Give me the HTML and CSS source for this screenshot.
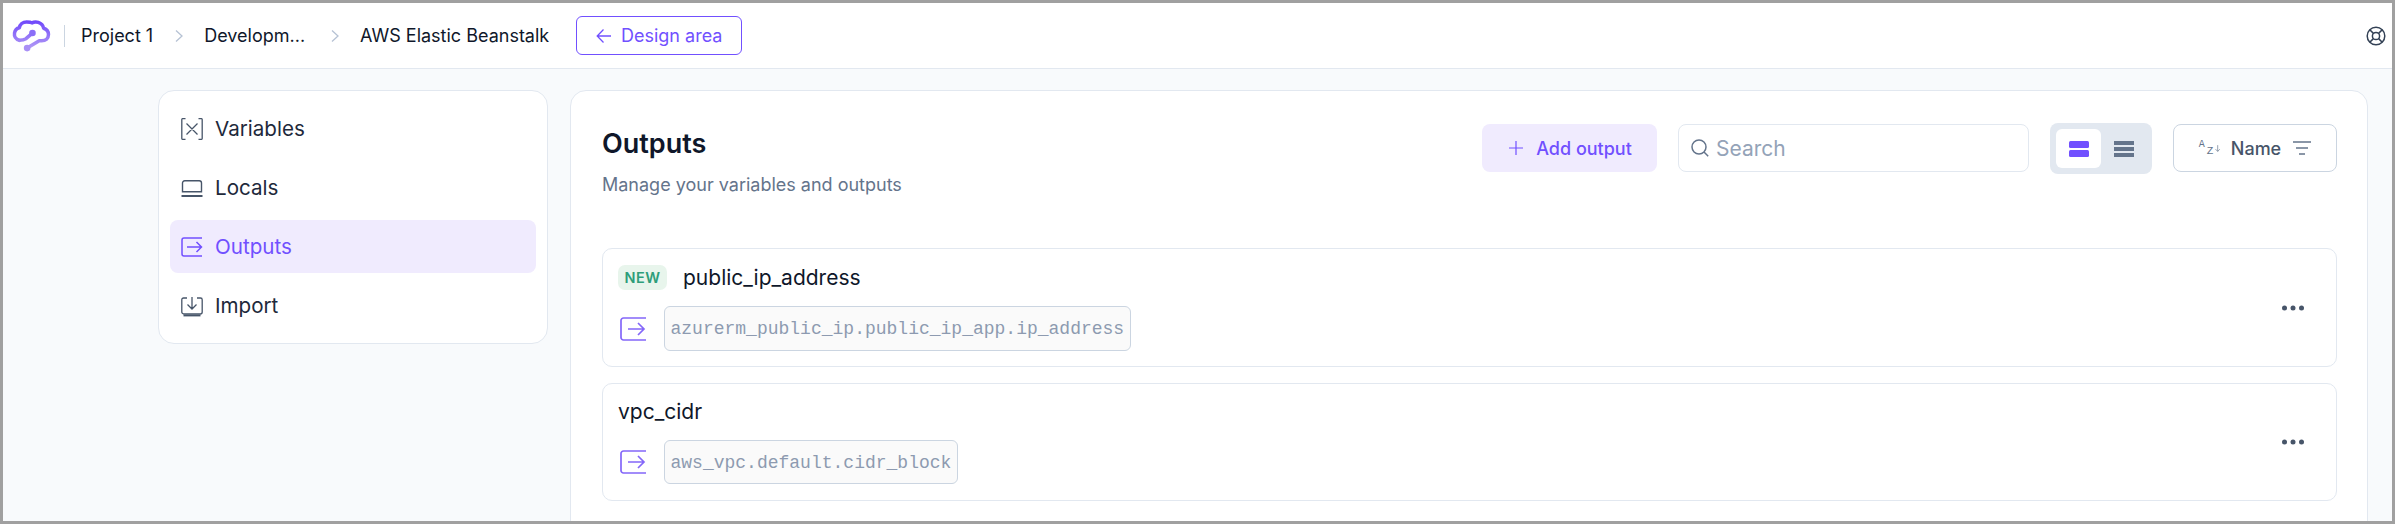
FILE: index.html
```html
<!DOCTYPE html>
<html lang="en">
<head>
<meta charset="utf-8">
<title>Outputs</title>
<link rel="stylesheet" href="styles.css">
</head>
<body>
<div class="frame">
  <header class="topbar">
    <svg class="logo" viewBox="0 0 40 34" fill="none" stroke-width="3.600" stroke-linecap="round" stroke-linejoin="round">
      <defs><linearGradient id="lg" gradientUnits="userSpaceOnUse" x1="0" y1="2" x2="0" y2="32"><stop offset="0" stop-color="#7048fb"/><stop offset="1" stop-color="#b6a0f5"/></linearGradient></defs>
      <path stroke="url(#lg)" d="M7.500 22C3.500 21 2 17.500 2.500 14.500C3 11.500 5 9.500 7.500 9C8 5.500 11 3 15 3C17 3 19 3 20.500 4C22.500 3 25 3 27 3.500C30 4.500 32 6.500 32.500 9.500C35.500 10.500 37.500 13 37.500 16C37.500 20 34.500 22.500 30.500 22.500H28L15.500 30"/>
      <path stroke="url(#lg)" d="M21 14.500L14 20.500Q12 22 7.500 22"/>
      <circle cx="21" cy="14.500" r="3.400" fill="#8a6ef8" stroke="none"/>
      <circle cx="15.500" cy="30" r="3.400" fill="#a98ff6" stroke="none"/>
    </svg>
    <span class="vsep"></span>
    <nav class="crumbs">
      <span class="crumb">Project 1</span>
      <svg class="chev" viewBox="0 0 10 14" fill="none" stroke="#b6c2d4" stroke-width="1.300"><path d="M2 1.500L8 7L2 12.500"/></svg>
      <span class="crumb trunc">Developm...</span>
      <svg class="chev" viewBox="0 0 10 14" fill="none" stroke="#b6c2d4" stroke-width="1.300"><path d="M2 1.500L8 7L2 12.500"/></svg>
      <span class="crumb">AWS Elastic Beanstalk</span>
    </nav>
    <button class="design-btn">
      <svg class="ico16" viewBox="0 0 16 16" fill="none" stroke="currentColor" stroke-width="1.300"><path d="M15 8H1.500M7.500 1.500L1.200 8L7.500 14.500"/></svg>
      Design area
    </button>
    <svg class="help" viewBox="0 0 20 20" fill="none" stroke="#334155" stroke-width="1.500"><circle cx="10" cy="10" r="8.800"/><circle cx="10" cy="10" r="3.600"/><path d="M3.800 3.800L7.400 7.400M16.200 3.800L12.600 7.400M3.800 16.200L7.400 12.600M16.200 16.200L12.600 12.600"/></svg>
  </header>

  <div class="content">
    <aside class="side">
      <a class="item">
        <svg class="nav-ico" viewBox="0 0 22 22" fill="none" stroke="#475569" stroke-width="1.300"><path d="M4.500 .7H1.500A.8.8 0 0 0 .8 1.500V20.500A.8.8 0 0 0 1.500 21.300H4.500M17.500 .7H20.500A.8.8 0 0 1 21.200 1.500V20.500A.8.8 0 0 1 20.500 21.300H17.500M5.500 5.500L16.500 16.500M16.500 5.500L5.500 16.500"/></svg>
        <span>Variables</span>
      </a>
      <a class="item">
        <svg class="nav-ico" viewBox="0 0 22 22" fill="none" stroke="#475569" stroke-width="1.400"><path d="M1.500 14.700V6A2.200 2.200 0 0 1 3.700 3.800H18.300A2.200 2.200 0 0 1 20.500 6V14.700Z"/><path d="M.5 19H21.500" stroke-width="2"/></svg>
        <span>Locals</span>
      </a>
      <a class="item active">
        <svg class="nav-ico" viewBox="0 0 22 22" fill="none" stroke="#7150ff" stroke-width="1.500"><path d="M21 2H3A2 2 0 0 0 1 4V18A2 2 0 0 0 3 20H21M6 11H20.500M15.500 6L20.500 11L15.500 16"/></svg>
        <span>Outputs</span>
      </a>
      <a class="item">
        <svg class="nav-ico" viewBox="0 0 22 22" fill="none" stroke="#475569" stroke-width="1.300"><path d="M6 3H2.500A1.700 1.700 0 0 0 .8 4.700V17A2 2 0 0 0 2.800 19H19.200A2 2 0 0 0 21.200 17V4.700A1.700 1.700 0 0 0 19.500 3H16M11 2V13.500M6.500 9.500L11 14L15.500 9.500"/><path d="M2.500 20.500H19.500" stroke-width="1.800"/></svg>
        <span>Import</span>
      </a>
    </aside>

    <main class="main">
      <div class="head">
        <div class="titles">
          <h1>Outputs</h1>
          <p>Manage your variables and outputs</p>
        </div>
        <div class="tools">
          <button class="add">
            <svg class="plus" viewBox="0 0 14 14" fill="none" stroke="currentColor" stroke-width="1.200"><path d="M7 0V14M0 7H14"/></svg>
            Add output
          </button>
          <label class="search">
            <svg class="search-ico" viewBox="0 0 18 18" fill="none" stroke="#64748b" stroke-width="1.500"><circle cx="8" cy="8" r="7"/><path d="M13 13L17.200 17.200"/></svg>
            <span>Search</span>
          </label>
          <div class="toggle">
            <span class="seg on"><svg class="seg-ico" viewBox="0 0 20 16" fill="#7150ff"><rect width="20" height="7" rx="1.500"/><rect y="9" width="20" height="7" rx="1.500"/></svg></span>
            <span class="seg"><svg class="seg-ico" viewBox="0 0 20 16" fill="#64748b"><rect width="20" height="4"/><rect y="6" width="20" height="4"/><rect y="12" width="20" height="4"/></svg></span>
          </div>
          <button class="sort">
            <span class="az"><span class="a">A</span><span class="z">Z</span><svg class="az-arrow" viewBox="0 0 8 10" fill="none" stroke="#64748b" stroke-width="1"><path d="M4 0V9.300M.8 6L4 9.300L7.200 6"/></svg></span>
            <span>Name</span>
            <svg class="filter" viewBox="0 0 18 14" fill="none" stroke="#64748b" stroke-width="1.300"><path d="M0 1H18M3 7H15M6 13H12"/></svg>
          </button>
        </div>
      </div>

      <section class="card">
        <div class="info">
          <div class="name-row"><span class="badge">NEW</span><span class="name">public_ip_address</span></div>
          <div class="value-row">
            <svg class="val-ico" viewBox="0 0 26 24" fill="none" stroke="#8467f9" stroke-width="1.700"><path d="M26 1H3.500A2.500 2.500 0 0 0 1 3.500V20.500A2.500 2.500 0 0 0 3.500 23H26M8 12H24M18 6L24 12L18 18"/></svg>
            <code>azurerm_public_ip.public_ip_app.ip_address</code>
          </div>
        </div>
        <svg class="more" viewBox="0 0 22 6" fill="#475569"><circle cx="2.500" cy="3" r="2.500"/><circle cx="11" cy="3" r="2.500"/><circle cx="19.500" cy="3" r="2.500"/></svg>
      </section>

      <section class="card second">
        <div class="info">
          <div class="name-row"><span class="name">vpc_cidr</span></div>
          <div class="value-row">
            <svg class="val-ico" viewBox="0 0 26 24" fill="none" stroke="#8467f9" stroke-width="1.700"><path d="M26 1H3.500A2.500 2.500 0 0 0 1 3.500V20.500A2.500 2.500 0 0 0 3.500 23H26M8 12H24M18 6L24 12L18 18"/></svg>
            <code>aws_vpc.default.cidr_block</code>
          </div>
        </div>
        <svg class="more" viewBox="0 0 22 6" fill="#475569"><circle cx="2.500" cy="3" r="2.500"/><circle cx="11" cy="3" r="2.500"/><circle cx="19.500" cy="3" r="2.500"/></svg>
      </section>
    </main>
  </div>
</div>
</body>
</html>
```
FILE: styles.css
```css
* { box-sizing: border-box; }
html, body { margin: 0; padding: 0; }
body { font-family: Inter, "Liberation Sans", sans-serif; color: #0f172a; }
button { font-family: inherit; cursor: pointer; }

.frame {
  width: 2395px;
  height: 524px;
  border: 3px solid #a0a0a0;
  background: #f8fafc;
  overflow: hidden;
  display: flex;
  flex-direction: column;
}

.topbar {
  height: 66px;
  flex: none;
  display: flex;
  align-items: center;
  background: #fff;
  border-bottom: 1.5px solid #e2e8f0;
  padding-left: 9px;
  padding-right: 6px;
}
.logo { width: 39px; height: 33px; flex: none; }
.vsep { width: 1px; height: 22px; background: #cbd5e1; margin-left: 13px; margin-right: 16px; }
.crumbs { display: flex; align-items: center; }
.crumb { font-size: 18px; color: #0f172a; white-space: nowrap; }
.crumb.trunc { padding-right: 4px; }
.chev { width: 10px; height: 14px; margin: 0 20.500px; flex: none; }

.design-btn {
  margin-left: 27px;
  width: 166px;
  height: 39px;
  display: flex;
  align-items: center;
  justify-content: center;
  gap: 9px;
  background: #fff;
  color: #7150ff;
  border: 1px solid #7150ff;
  border-radius: 6px;
  font-size: 18px;
}
.ico16 { width: 16px; height: 16px; }
.help { width: 20px; height: 20px; margin-left: auto; }

.content {
  flex: 1;
  display: flex;
  align-items: flex-start;
  gap: 22px;
  padding: 21px 0 0 155px;
}

.side {
  width: 390px;
  height: 254px;
  flex: none;
  background: #fff;
  border: 1px solid #e2e8f0;
  border-radius: 16px;
  padding: 11px;
  display: flex;
  flex-direction: column;
  gap: 6px;
}
.item {
  height: 54px;
  display: flex;
  align-items: center;
  gap: 12px;
  padding-left: 11px;
  border-radius: 8px;
  font-size: 20.600px;
  color: #1e293b;
}
.item.active { background: #f0ebfe; color: #7150ff; }
.nav-ico { width: 22px; height: 22px; flex: none; }

.main {
  width: 1798px;
  height: 440px;
  flex: none;
  background: #fff;
  border: 1px solid #e2e8f0;
  border-radius: 16px 16px 0 0;
  padding: 32px 30px 0 31px;
}
.head { display: flex; justify-content: space-between; align-items: flex-start; height: 125px; }
h1 { margin: 0; font-size: 27px; font-weight: 600; line-height: 32px; color: #0f172a; }
.titles { padding-top: 5px; }
.titles p { margin: 13px 0 0; font-size: 18px; line-height: 24px; color: #64748b; }

.tools { display: flex; align-items: flex-start; height: 51px; }
.add {
  width: 175px;
  height: 48px;
  margin-top: 1px;
  padding: 0 0 0 2px;
  display: flex;
  align-items: center;
  justify-content: center;
  gap: 13px;
  background: #f0ebfe;
  color: #7150ff;
  border: 0;
  border-radius: 8px;
  font-size: 18px;
  font-weight: 500;
}
.plus { width: 14px; height: 14px; }
.search {
  width: 351px;
  height: 48px;
  margin: 1px 0 0 21px;
  display: flex;
  align-items: center;
  gap: 7px;
  padding-left: 12px;
  background: #fff;
  border: 1px solid #e2e8f0;
  border-radius: 8px;
  font-size: 21px;
  color: #94a3b8;
}
.search-ico { width: 18px; height: 18px; flex: none; }
.toggle {
  width: 102px;
  height: 51px;
  margin-left: 21px;
  padding: 6px;
  display: flex;
  background: #e2e8f0;
  border-radius: 8px;
}
.seg { width: 45px; height: 39px; display: flex; align-items: center; justify-content: center; border-radius: 6px; }
.seg.on { background: #fff; }
.seg-ico { width: 20px; height: 16px; }
.sort {
  width: 164px;
  height: 48px;
  margin: 1px 0 0 21px;
  display: flex;
  align-items: center;
  justify-content: center;
  gap: 10px;
  background: #fff;
  border: 1px solid #cbd5e1;
  border-radius: 8px;
  font-size: 18px;
  font-weight: 500;
  color: #475569;
}
.az { display: flex; align-items: center; height: 14px; width: 22px; gap: 2px; font-family: "Liberation Mono", monospace; color: #64748b; }
.az .a { align-self: flex-start; font-size: 10px; line-height: 8px; }
.az .z { align-self: flex-end; font-size: 11px; line-height: 8px; }
.az-arrow { width: 7px; height: 9px; }
.filter { width: 18px; height: 14px; margin-left: 2px; }

.card {
  height: 119px;
  display: flex;
  align-items: center;
  justify-content: space-between;
  padding: 0 32px 0 15px;
  border: 1px solid #e2e8f0;
  border-radius: 10px;
  background: #fff;
}
.card.second { height: 118px; margin-top: 16px; }
.info { display: flex; flex-direction: column; gap: 16px; align-self: flex-start; padding-top: 16px; }
.card.second .info { padding-top: 15px; }
.name-row { display: flex; align-items: center; height: 25px; }
.badge {
  width: 49px;
  height: 25px;
  margin-right: 16px;
  display: flex;
  align-items: center;
  justify-content: center;
  background: #e8f5ec;
  color: #2e9e7a;
  border-radius: 7px;
  font-size: 14.500px;
  font-weight: 600;
  letter-spacing: .5px;
}
.name { font-size: 21px; color: #0f172a; }
.value-row { display: flex; align-items: center; gap: 18px; padding-left: 2px; }
.val-ico { width: 26px; height: 24px; flex: none; }
code {
  height: 45px;
  padding: 10px 5.500px 0;
  background: #fafafa;
  border: 1px solid #cbd5e1;
  border-radius: 6px;
  font-family: "Liberation Mono", monospace;
  font-size: 18px;
  line-height: 24px;
  color: #8d9ab0;
  white-space: nowrap;
}
.second code { height: 44px; }
.more { width: 22px; height: 6px; flex: none; }
```
